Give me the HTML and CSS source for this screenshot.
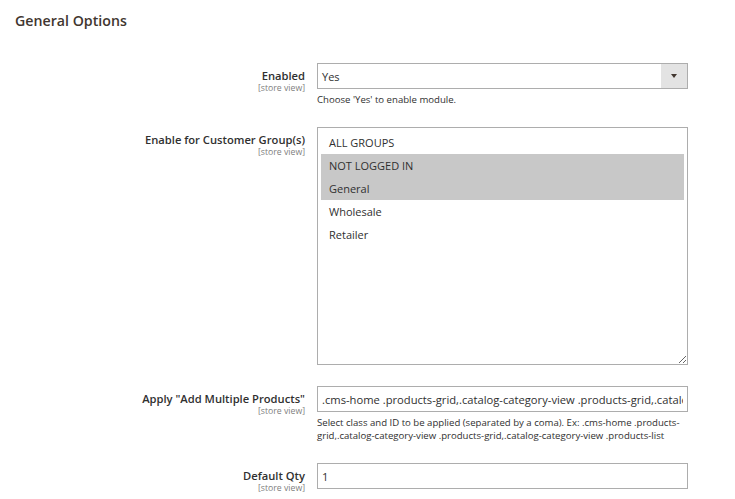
FILE: index.html
```html
<!DOCTYPE html>
<html>
<head>
<meta charset="utf-8">
<link rel="stylesheet" href="styles.css">
</head>
<body>
<div class="section">
  <h2 class="title">General Options</h2>
  <div class="fields">
    <div class="field">
      <div class="label"><span class="name">Enabled</span><span class="scope">[store view]</span></div>
      <div class="control">
        <div class="select"><span class="value">Yes</span><span class="arrow"></span></div>
        <div class="note">Choose 'Yes' to enable module.</div>
      </div>
    </div>
    <div class="field">
      <div class="label"><span class="name">Enable for Customer Group(s)</span><span class="scope">[store view]</span></div>
      <div class="control">
        <div class="multi">
          <div class="opt">ALL GROUPS</div>
          <div class="opt sel">NOT LOGGED IN</div>
          <div class="opt sel">General</div>
          <div class="opt">Wholesale</div>
          <div class="opt">Retailer</div>
        </div>
      </div>
    </div>
    <div class="field">
      <div class="label"><span class="name">Apply "Add Multiple Products"</span><span class="scope">[store view]</span></div>
      <div class="control">
        <input class="input" type="text" readonly value=".cms-home .products-grid,.catalog-category-view .products-grid,.catalog-category-view .products-list">
        <div class="note">Select class and ID to be applied (separated by a coma). Ex: .cms-home .products-grid,.catalog-category-view .products-grid,.catalog-category-view .products-list</div>
      </div>
    </div>
    <div class="field">
      <div class="label"><span class="name">Default Qty</span><span class="scope">[store view]</span></div>
      <div class="control">
        <input class="input" type="text" readonly value="1">
      </div>
    </div>
  </div>
</div>
</body>
</html>
```
FILE: styles.css
```css
html, body { margin: 0; padding: 0; background: #fff; }
body { font-family: "Open Sans", "Liberation Sans", sans-serif; color: #303030; }
.section { padding: 0 15px; }
.title {
  margin: 0;
  padding-top: 11px;
  font-size: 14.2px;
  font-weight: 600;
  line-height: 20px;
  color: #41362f;
  height: 52px;
}
.field {
  display: grid;
  grid-template-columns: 290px 371px;
  column-gap: 12px;
  margin-bottom: 21px;
}
.label {
  display: flex;
  flex-direction: column;
  align-items: flex-end;
  text-align: right;
  padding-top: 5px;
}
.name { font-size: 11.2px; font-weight: 600; line-height: 15px; color: #303030; }
.scope { font-size: 8.7px; line-height: 10px; color: #808080; }
.select {
  height: 26px;
  box-sizing: border-box;
  border: 1px solid #adadad;
  display: flex;
  align-items: center;
}
.value { font-size: 11px; padding-left: 4px; flex: 1; color: #303030; }
.arrow {
  width: 26px;
  align-self: stretch;
  background: #e3e3e3;
  display: flex;
  align-items: center;
  justify-content: center;
}
.arrow::after {
  content: "";
  border-left: 3px solid transparent;
  border-right: 3px solid transparent;
  border-top: 4px solid #41362f;
}
.note { font-size: 9.6px; line-height: 13px; color: #303030; margin-top: 4px; }
.multi {
  height: 238px;
  box-sizing: border-box;
  border: 1px solid #adadad;
  padding: 3px;
  resize: both;
  overflow: auto;
}
.opt { font-size: 11px; height: 23px; line-height: 23px; padding-left: 8px; color: #303030; }
.opt.sel { background: #c8c8c8; }
.input {
  display: block;
  width: 100%;
  height: 26px;
  box-sizing: border-box;
  border: 1px solid #adadad;
  border-radius: 0;
  margin: 0;
  font-family: "Open Sans", "Liberation Sans", sans-serif;
  font-size: 11.2px;
  padding: 0 4px;
  color: #303030;
  background: #fff;
  outline: none;
}
```
